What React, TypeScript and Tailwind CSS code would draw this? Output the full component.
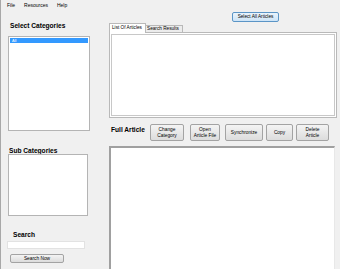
const Btn: React.FC<{ className?: string; children: React.ReactNode }> = ({
  className = "",
  children,
}) => (
  <div
    className={`flex items-center justify-center text-center rounded-[2px] border border-[#a3a3a3] bg-gradient-to-b from-[#f4f4f4] to-[#dcdcdc] text-[4.8px] leading-[5.5px] text-black ${className}`}
  >
    {children}
  </div>
);

const App: React.FC = () => {
  return (
    <div className="w-[340px] h-[269px] overflow-hidden bg-[#f0f0f0] border-l border-[#a8a8a8] font-['Liberation_Sans',Arial,sans-serif] text-black">
      {/* menu bar */}
      <div className="h-[12px] flex gap-[9px] pl-[6px] pt-[2px] text-[5px] leading-[7px]">
        <span>File</span>
        <span>Resources</span>
        <span>Help</span>
      </div>

      <div className="flex">
        {/* left column */}
        <div className="w-[108px] flex flex-col">
          <div className="ml-[9px] mt-[10px] text-[6.6px] leading-[8px] font-bold">
            Select Categories
          </div>
          <div className="ml-[7px] mt-[6px] w-[82px] h-[95px] bg-white border border-[#b4b4b4] p-[1px]">
            <div className="h-[5px] bg-[#3399ff] text-white text-[4px] leading-[5px] pl-[2px]">
              All
            </div>
          </div>
          <div className="ml-[8px] mt-[16px] text-[6.6px] leading-[8px] font-bold">
            Sub Categories
          </div>
          <div className="ml-[7px] mt-[-1px] w-[80px] h-[62px] bg-white border border-[#b4b4b4]" />
          <div className="ml-[12px] mt-[15px] text-[6.6px] leading-[8px] font-bold">
            Search
          </div>
          <div className="ml-[6px] mt-[2px] w-[78px] h-[8px] bg-white border border-[#e2e2e2]" />
          <Btn className="ml-[9px] mt-[5px] w-[54px] h-[9px]">Search Now</Btn>
        </div>

        {/* right column */}
        <div className="flex flex-col">
          <div className="h-[10px] flex">
            <div className="ml-[123px] w-[47px] h-[10px] flex items-center justify-center rounded-[2px] border border-[#5b95c6] bg-gradient-to-b from-[#eaf4fc] to-[#cde4f7] text-[4.7px]">
              Select All Articles
            </div>
          </div>
          <div className="flex items-end h-[10px]">
            <div className="w-[37px] h-[10px] bg-white border border-b-0 border-[#b9b9b9] text-[4.7px] leading-[8px] pl-[2px] relative top-[1px] z-10">
              List Of Articles
            </div>
            <div className="w-[37px] h-[7px] bg-[#ececec] border border-b-0 border-l-0 border-[#b9b9b9] text-[4.7px] leading-[6px] pl-[1px]">
              Search Results
            </div>
          </div>
          <div className="w-[228px] h-[86px] bg-white border border-[#b9b9b9] p-[1px]">
            <div className="w-full h-full border border-[#c8c8c8] bg-white" />
          </div>

          <div className="flex items-start mt-[6px] h-[17px]">
            <div className="ml-[2px] mt-[2px] w-[39px] text-[6.6px] leading-[8px] font-bold">
              Full Article
            </div>
            <Btn className="w-[34px] h-[17px]">
              Change
              <br />
              Category
            </Btn>
            <Btn className="ml-[6px] w-[30px] h-[17px]">
              Open
              <br />
              Article File
            </Btn>
            <Btn className="ml-[5px] w-[38px] h-[17px]">Synchronize</Btn>
            <Btn className="ml-[3px] w-[27px] h-[17px]">Copy</Btn>
            <Btn className="ml-[3px] w-[33px] h-[17px]">
              Delete
              <br />
              Article
            </Btn>
          </div>

          <div className="mt-[5px] w-[226px] h-[130px] bg-white border-l-2 border-t-2 border-[#a0a0a0] border-r border-r-[#e8e8e8]" />
        </div>
      </div>
    </div>
  );
};

export default App;
